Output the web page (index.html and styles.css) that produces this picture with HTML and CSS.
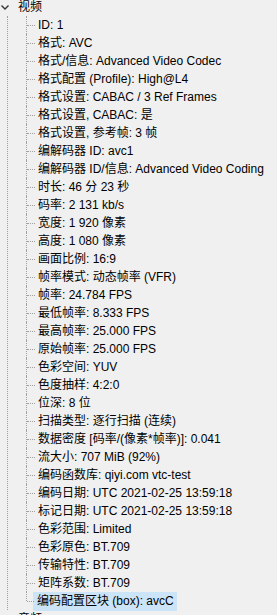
FILE: index.html
```html
<!DOCTYPE html>
<html lang="zh-CN">
<head>
    <meta charset="UTF-8">
    <title>MediaInfo 树状视图</title>
    <link rel="stylesheet" href="styles.css">
</head>
<body>
    <div class="tree">
        <!-- Video section -->
        <div class="node-head">
            <svg class="chevron" width="10" height="10" viewBox="0 0 10 10">
                <path d="M1.5 3.5 L5 7 L8.5 3.5" fill="none" stroke="#333" stroke-width="1.4"/>
            </svg>
            <span class="label">视频</span>
        </div>
        <div class="children">
            <ul class="list">
                <li><span class="text">ID: 1</span></li>
                <li><span class="text">格式: AVC</span></li>
                <li><span class="text">格式/信息: Advanced Video Codec</span></li>
                <li><span class="text">格式配置 (Profile): High@L4</span></li>
                <li><span class="text">格式设置: CABAC / 3 Ref Frames</span></li>
                <li><span class="text">格式设置, CABAC: 是</span></li>
                <li><span class="text">格式设置, 参考帧: 3 帧</span></li>
                <li><span class="text">编解码器 ID: avc1</span></li>
                <li><span class="text">编解码器 ID/信息: Advanced Video Coding</span></li>
                <li><span class="text">时长: 46 分 23 秒</span></li>
                <li><span class="text">码率: 2 131 kb/s</span></li>
                <li><span class="text">宽度: 1 920 像素</span></li>
                <li><span class="text">高度: 1 080 像素</span></li>
                <li><span class="text">画面比例: 16:9</span></li>
                <li><span class="text">帧率模式: 动态帧率 (VFR)</span></li>
                <li><span class="text">帧率: 24.784 FPS</span></li>
                <li><span class="text">最低帧率: 8.333 FPS</span></li>
                <li><span class="text">最高帧率: 25.000 FPS</span></li>
                <li><span class="text">原始帧率: 25.000 FPS</span></li>
                <li><span class="text">色彩空间: YUV</span></li>
                <li><span class="text">色度抽样: 4:2:0</span></li>
                <li><span class="text">位深: 8 位</span></li>
                <li><span class="text">扫描类型: 逐行扫描 (连续)</span></li>
                <li><span class="text">数据密度 [码率/(像素*帧率)]: 0.041</span></li>
                <li><span class="text">流大小: 707 MiB (92%)</span></li>
                <li><span class="text">编码函数库: qiyi.com vtc-test</span></li>
                <li><span class="text">编码日期: UTC 2021-02-25 13:59:18</span></li>
                <li><span class="text">标记日期: UTC 2021-02-25 13:59:18</span></li>
                <li><span class="text">色彩范围: Limited</span></li>
                <li><span class="text">色彩原色: BT.709</span></li>
                <li><span class="text">传输特性: BT.709</span></li>
                <li><span class="text">矩阵系数: BT.709</span></li>
                <li class="selected"><span class="text">编码配置区块 (box): avcC</span></li>
            </ul>
        </div>

        <!-- Audio section (scrolled off) -->
        <div class="node-head">
            <svg class="chevron" width="10" height="10" viewBox="0 0 10 10">
                <path d="M1.5 3.5 L5 7 L8.5 3.5" fill="none" stroke="#333" stroke-width="1.4"/>
            </svg>
            <span class="label">音频</span>
        </div>
    </div>
</body>
</html>
```

FILE: styles.css
```css
/* Global */
body {
    margin: 0;
    background: #f0f0f0;
    color: #000;
    font-family: "Liberation Sans", "Noto Sans CJK SC", sans-serif;
    font-size: 12px;
    overflow: hidden;
}

.tree {
    margin-top: -2px;
}

/* Top level node */
.node-head {
    display: flex;
    align-items: center;
    height: 18px;
    line-height: 18px;
    white-space: nowrap;
}

.chevron {
    width: 10px;
    height: 10px;
    margin-left: 0;
    margin-right: 8px;
    flex-shrink: 0;
}

/* Children block, the outer line belongs to the root level */
.children {
    margin-left: 7px;
    border-left: 1px dotted #a0a0a0;
    padding-left: 18px;
}

.list {
    list-style: none;
    margin: 0;
    padding: 0;
}

.list li {
    position: relative;
    height: 18px;
    line-height: 18px;
    padding-left: 11px;
    border-left: 1px dotted #a0a0a0;
    white-space: nowrap;
}

/* horizontal connector */
.list li::before {
    content: "";
    position: absolute;
    left: 0;
    top: 9px;
    width: 8px;
    border-top: 1px dotted #a0a0a0;
}

.list li:last-child {
    border-left: none;
}

/* last child: vertical line stops at the middle */
.list li:last-child::after {
    content: "";
    position: absolute;
    left: 0;
    top: 0;
    height: 9px;
    border-left: 1px dotted #a0a0a0;
}

.list li:last-child::before {
    left: 1px;
    width: 7px;
}

.text {
    display: inline-block;
    height: 18px;
}

.selected .text {
    background: #cce4f7;
    margin-left: -4px;
    padding: 0 3px 0 4px;
    height: 19px;
}
```
